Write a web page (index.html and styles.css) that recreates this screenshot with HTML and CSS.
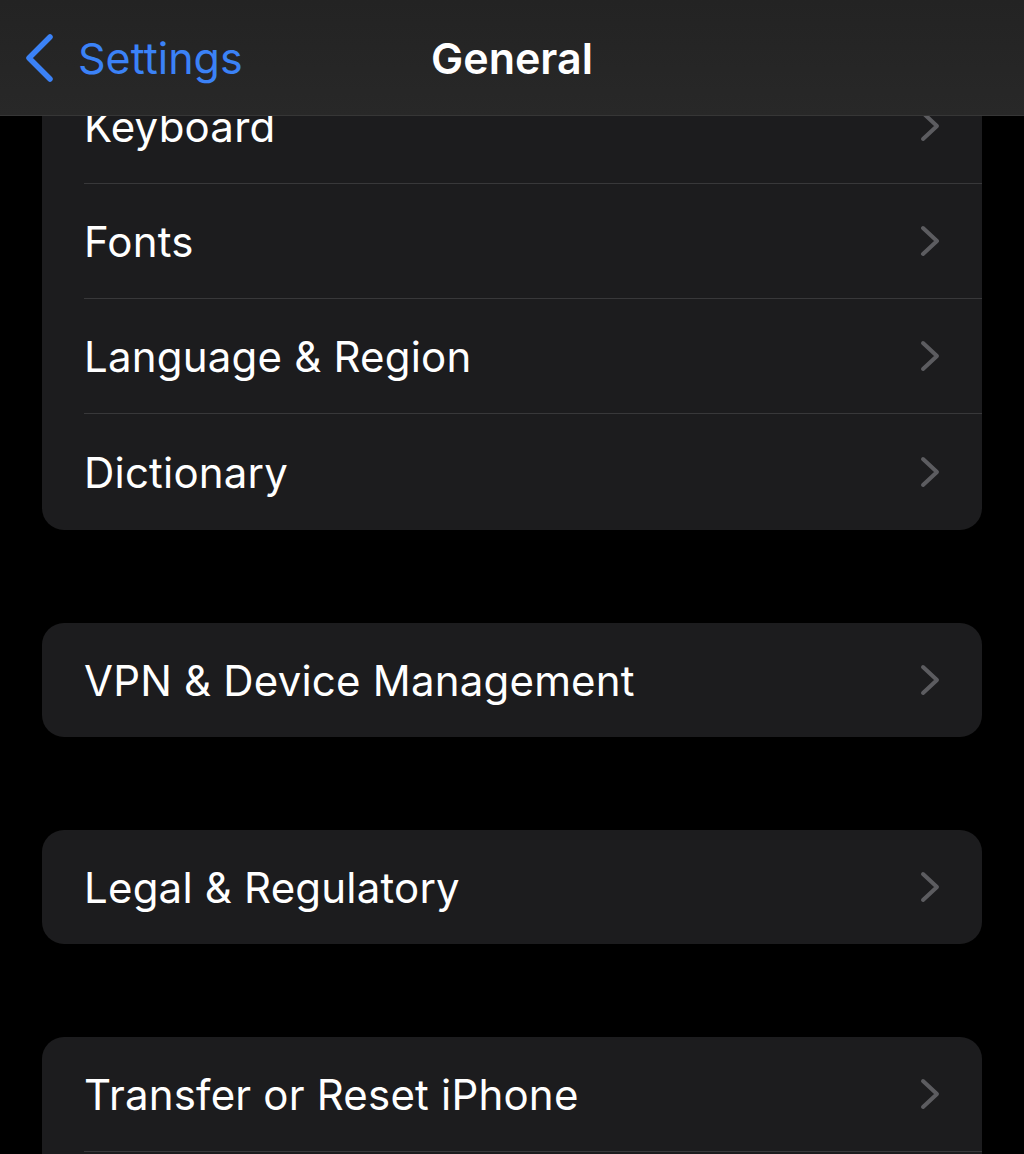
FILE: index.html
```html
<!DOCTYPE html>
<html lang="en">
  <head>
    <meta charset="UTF-8" />
    <meta name="viewport" content="width=device-width, initial-scale=1.0" />
    <title>General</title>
    <link rel="stylesheet" href="styles.css">
  </head>
  <body>
    <div class="nav-bar">
      <a class="back" href="#">
        <svg class="back-icon" width="30" height="50" viewBox="0 0 30 50">
          <polyline points="26,4 5,25 26,46" />
        </svg>
        <span>Settings</span>
      </a>
      <h1 class="nav-title">General</h1>
      <div></div>
    </div>

    <div class="content">
      <div class="group first">
        <div class="row"><span class="label">Keyboard</span><span class="chevron"></span></div>
        <div class="row"><span class="label">Fonts</span><span class="chevron"></span></div>
        <div class="row"><span class="label">Language &amp; Region</span><span class="chevron"></span></div>
        <div class="row"><span class="label">Dictionary</span><span class="chevron"></span></div>
      </div>

      <div class="group">
        <div class="row"><span class="label">VPN &amp; Device Management</span><span class="chevron"></span></div>
      </div>

      <div class="group">
        <div class="row"><span class="label">Legal &amp; Regulatory</span><span class="chevron"></span></div>
      </div>

      <div class="group last">
        <div class="row"><span class="label">Transfer or Reset iPhone</span><span class="chevron"></span></div>
        <!-- next row starts right at the bottom edge -->
        <div class="row"></div>
      </div>
    </div>

    <script>
      // draw the same chevron in every row
      document.querySelectorAll(".chevron").forEach((el) => {
        el.innerHTML = `
          <svg width="20" height="32" viewBox="0 0 20 32">
            <polyline points="3,3 17,16 3,29" />
          </svg>
        `;
      });
    </script>
  </body>
</html>
```

FILE: styles.css
```css
html, body {
  margin: 0;
  padding: 0;
}

body {
  background: #000;
  color: #fff;
  font-family: Inter, "Noto Sans", "Liberation Sans", sans-serif;
  height: 1154px;
  overflow: hidden;
}

/* top bar lies over the scrolled list */
.nav-bar {
  position: fixed;
  top: 0;
  left: 0;
  right: 0;
  height: 115px;
  z-index: 10;
  display: grid;
  grid-template-columns: 1fr auto 1fr;
  align-items: center;
  background: linear-gradient(180deg, #232323 0%, #282828 100%);
  border-bottom: 1px solid #363636;
}

.back {
  display: flex;
  align-items: center;
  gap: 24px;
  padding-left: 24px;
  color: #3b82f7;
  text-decoration: none;
  font-size: 43px;
  letter-spacing: 0;
}

.back-icon polyline {
  fill: none;
  stroke: #3b82f7;
  stroke-width: 5.5;
  stroke-linecap: round;
  stroke-linejoin: round;
}

.nav-title {
  margin: 0;
  font-size: 43px;
  font-weight: 600;
  letter-spacing: 0;
}

.content {
  padding: 69px 42px 0 42px;
  display: flex;
  flex-direction: column;
  gap: 93px;
}

.group {
  background: #1c1c1e;
  border-radius: 22px;
  overflow: hidden;
}

.group.first {
  border-top-left-radius: 0;
  border-top-right-radius: 0;
}

.row {
  height: 114px;
  display: flex;
  align-items: center;
  justify-content: space-between;
  margin-left: 42px;
  padding-right: 42px;
  border-bottom: 1px solid #38383a;
}

.group .row:last-child {
  border-bottom: none;
}

.group.first .row:last-child {
  height: 116px;
}

.label {
  font-size: 42px;
  letter-spacing: 0.2px;
  color: #fff;
}

.chevron {
  display: flex;
}

.chevron polyline {
  fill: none;
  stroke: #5c5c60;
  stroke-width: 4;
  stroke-linecap: round;
  stroke-linejoin: round;
}
```
